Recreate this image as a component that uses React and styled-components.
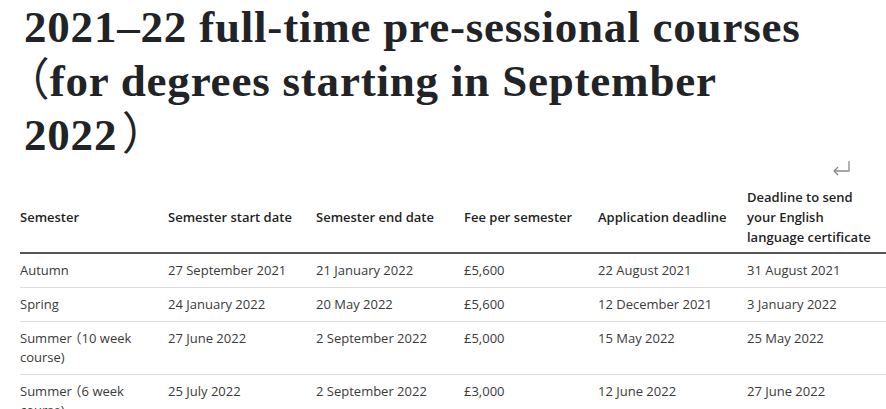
import React from 'react';
import styled, { createGlobalStyle } from 'styled-components';

const GlobalStyle = createGlobalStyle`
  html, body {
    margin: 0;
    padding: 0;
    background: #ffffff;
    overflow: hidden;
  }
`;

const headers = [
  'Semester',
  'Semester start date',
  'Semester end date',
  'Fee per semester',
  'Application deadline',
  'Deadline to send your English language certificate',
];

const colWidths = [148, 148, 148, 134, 149, 139];

// full-width brackets, spaced like the reference font draws them
const Summer = ({ weeks }) => (
  <>
    Summer<Paren $before={0.25} $after={0}>（</Paren>{weeks} week course)
  </>
);

const rows = [
  ['Autumn', '27 September 2021', '21 January 2022', '£5,600', '22 August 2021', '31 August 2021'],
  ['Spring', '24 January 2022', '20 May 2022', '£5,600', '12 December 2021', '3 January 2022'],
  [<Summer weeks={10} />, '27 June 2022', '2 September 2022', '£5,000', '15 May 2022', '25 May 2022'],
  [<Summer weeks={6} />, '25 July 2022', '2 September 2022', '£3,000', '12 June 2022', '27 June 2022'],
];

const ReturnIcon = () => (
  <svg width="22" height="16" viewBox="0 0 22 16" fill="none" stroke="#8a8a8a" strokeWidth="1.3">
    <path d="M19 1 V11 H4" />
    <path d="M8 7 L4 11 L8 15" />
  </svg>
);

const App = () => {
  return (
    <Page>
      <GlobalStyle />
      <Title>
        2021–22 full-time pre-sessional courses{' '}
        <Paren $before={0.07} $after={0}>（</Paren>for degrees starting in September 2022
        <Paren $before={0.1} $after={0}>）</Paren>
      </Title>
      <IconRow>
        <ReturnIcon />
      </IconRow>
      <Table>
        <colgroup>
          {colWidths.map((w, i) => (
            <col key={i} style={{ width: w }} />
          ))}
        </colgroup>
        <thead>
          <tr>
            {headers.map((h) => (
              <Th key={h}>{h}</Th>
            ))}
          </tr>
        </thead>
        <tbody>
          {rows.map((r, i) => (
            <Row key={i}>
              {r.map((c, j) => (
                <Td key={j}>{c}</Td>
              ))}
            </Row>
          ))}
        </tbody>
      </Table>
    </Page>
  );
};

const Page = styled.div`
  padding: 0 0 0 20px;
  width: 900px;
`;

const Title = styled.h1`
  margin: 0;
  padding-left: 4px;
  width: 785px;
  font-family: "Liberation Serif", "Noto Sans CJK SC", serif;
  font-weight: 700;
  font-size: 45px;
  letter-spacing: 0.8px;
  line-height: 54px;
  color: #212326;
`;

const Paren = styled.span`
  font-family: "Noto Sans CJK SC", sans-serif;
  font-weight: 400;
  font-feature-settings: "halt";
  letter-spacing: 0;
  line-height: 0;
  padding-left: ${(p) => p.$before}em;
  padding-right: ${(p) => p.$after}em;
`;

const IconRow = styled.div`
  display: flex;
  justify-content: flex-end;
  align-items: flex-start;
  width: 832px;
  height: 21px;

  svg {
    margin-top: -2px;
  }
`;

const Table = styled.table`
  border-collapse: collapse;
  table-layout: fixed;
  width: 866px;
  font-family: "Open Sans", sans-serif;
  font-size: 13px;
`;

const Th = styled.th`
  text-align: left;
  vertical-align: middle;
  font-weight: 600;
  color: #1f1f1f;
  line-height: 20px;
  padding: 4px 8px 5px 0;
  border-bottom: 2px solid #555555;
`;

const Row = styled.tr`
  border-bottom: 1px solid #dcdcdc;
`;

const Td = styled.td`
  vertical-align: top;
  color: #3a3a3a;
  line-height: 19px;
  padding: 7px 12px 7px 0;
`;

export default App;
